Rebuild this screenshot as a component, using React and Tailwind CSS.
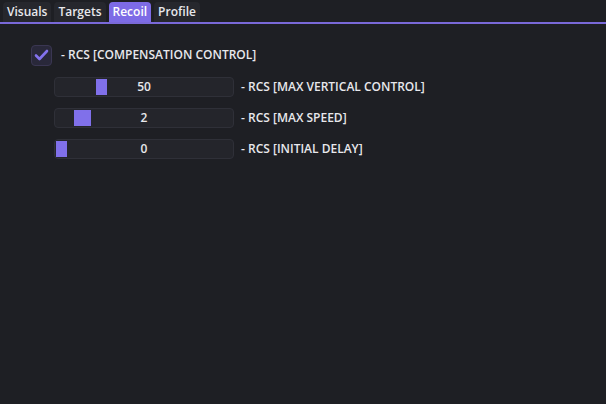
import React, { useState } from "react";

const tabs = ["Visuals", "Targets", "Recoil", "Profile"];

const sliders = [
  { value: 50, label: "- RCS [MAX VERTICAL CONTROL]", grab: "ml-[41px] w-[11px]" },
  { value: 2, label: "- RCS [MAX SPEED]", grab: "ml-[19px] w-[17px]" },
  { value: 0, label: "- RCS [INITIAL DELAY]", grab: "ml-px w-[11px]" },
];

const App = () => {
  const [active, setActive] = useState("Recoil");
  const [rcs, setRcs] = useState(true);

  return (
    <div
      className="w-[606px] h-[404px] bg-[#1e1f24] text-[#e8e8ec] text-[12px] font-semibold overflow-hidden"
      style={{ fontFamily: '"Open Sans", "Noto Sans", sans-serif' }}
    >
      {/* Barra de pestañas */}
      <div className="flex items-end gap-[3px] px-[3px] pt-[2px] border-b-2 border-[#7a69d9]">
        {tabs.map((t) => (
          <button
            key={t}
            onClick={() => setActive(t)}
            className={`h-[20px] px-[4px] rounded-t-[4px] leading-[20px] ${
              active === t ? "bg-[#7d6be6] text-white" : "bg-[#26272d]"
            }`}
          >
            {t}
          </button>
        ))}
      </div>

      {/* Contenido */}
      <div className="pl-[31px] pt-[20px] flex flex-col">
        <div className="flex items-center gap-[9px] h-[22px]">
          <button
            onClick={() => setRcs(!rcs)}
            className="w-[21px] h-[21px] rounded-[4px] bg-[#29283a] border border-[#3a3652] flex items-center justify-center"
          >
            {rcs && (
              <svg width="15" height="12" viewBox="0 0 15 12">
                <path
                  d="M2 6.5 L5.5 10 L13 2"
                  fill="none"
                  stroke="#8372ee"
                  strokeWidth="2.6"
                  strokeLinecap="round"
                  strokeLinejoin="round"
                />
              </svg>
            )}
          </button>
          <span>- RCS [COMPENSATION CONTROL]</span>
        </div>

        <div className="flex flex-col gap-[11px] mt-[11px] pl-[23px]">
          {sliders.map((s) => (
            <div key={s.label} className="flex items-center gap-[7px]">
              <div className="relative w-[180px] h-[20px] rounded-[4px] bg-[#24252b] border border-[#2f3038] flex items-center">
                <div className={`h-[16px] bg-[#8070ea] ${s.grab}`} />
                <span className="absolute inset-0 flex items-center justify-center">
                  {s.value}
                </span>
              </div>
              <span>{s.label}</span>
            </div>
          ))}
        </div>
      </div>
    </div>
  );
};

export default App;
